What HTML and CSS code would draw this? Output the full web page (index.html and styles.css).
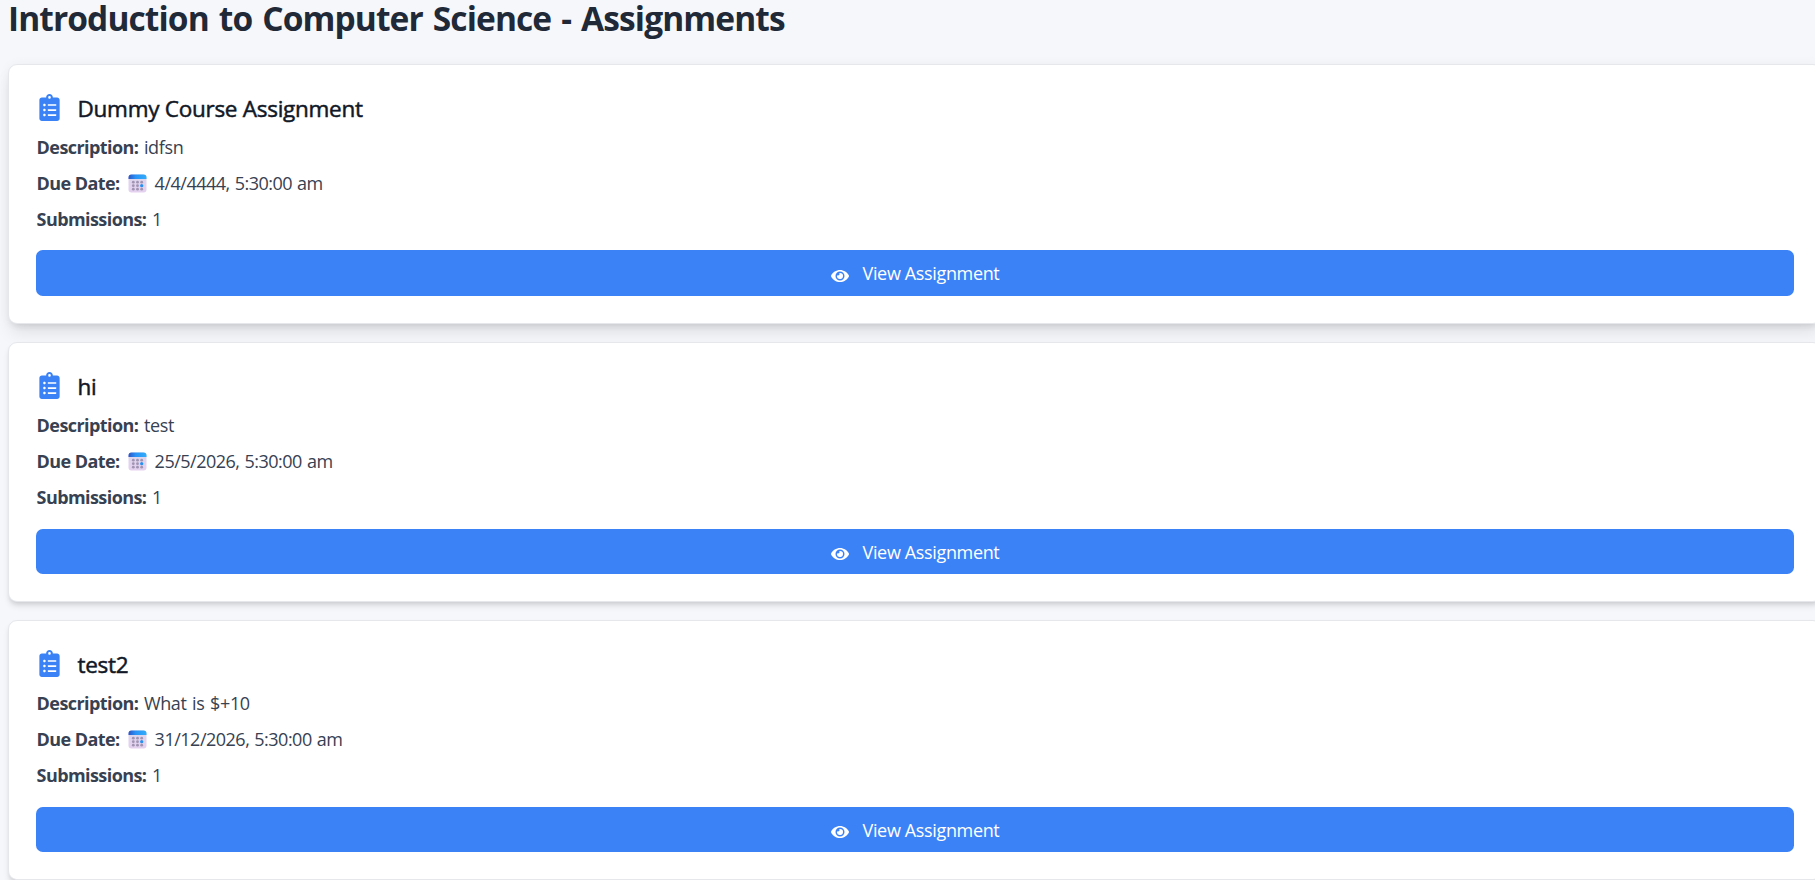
FILE: index.html
```
<!DOCTYPE html>
<html lang="en">
<head>
<meta charset="utf-8">
<title>Assignments</title>
<link rel="stylesheet" href="styles.css">
</head>
<body>
<svg class="defs" aria-hidden="true">
  <defs>
    <linearGradient id="cal-top"><stop offset="0" stop-color="#2d55c9"/><stop offset=".4" stop-color="#2993f5"/><stop offset="1" stop-color="#31adfa"/></linearGradient>
    <linearGradient id="cal-body" x2="0" y2="1"><stop offset="0" stop-color="#dcd8ec"/><stop offset="1" stop-color="#e4d0f0"/></linearGradient>
    <symbol id="clipboard" viewBox="0 0 384 512"><path d="M336 64h-80c0-35.3-28.7-64-64-64s-64 28.7-64 64H48C21.5 64 0 85.500 0 112v352c0 26.500 21.500 48 48 48h288c26.500 0 48-21.500 48-48V112c0-26.500-21.500-48-48-48zM96 424c-13.300 0-24-10.700-24-24s10.700-24 24-24 24 10.700 24 24-10.700 24-24 24zm0-96c-13.300 0-24-10.700-24-24s10.700-24 24-24 24 10.700 24 24-10.700 24-24 24zm0-96c-13.300 0-24-10.700-24-24s10.700-24 24-24 24 10.700 24 24-10.700 24-24 24zm96-192c13.300 0 24 10.700 24 24s-10.700 24-24 24-24-10.700-24-24 10.700-24 24-24zm128 368c0 4.400-3.600 8-8 8H168c-4.400 0-8-3.600-8-8v-16c0-4.400 3.600-8 8-8h144c4.400 0 8 3.600 8 8v16zm0-96c0 4.400-3.600 8-8 8H168c-4.400 0-8-3.600-8-8v-16c0-4.400 3.600-8 8-8h144c4.400 0 8 3.600 8 8v16zm0-96c0 4.400-3.600 8-8 8H168c-4.400 0-8-3.600-8-8v-16c0-4.400 3.600-8 8-8h144c4.400 0 8 3.600 8 8v16z"/></symbol>
    <symbol id="eye" viewBox="0 0 576 512"><path d="M572.520 241.400C518.290 135.590 410.930 64 288 64S57.680 135.640 3.480 241.410a32.350 32.350 0 0 0 0 29.190C57.710 376.410 165.070 448 288 448s230.320-71.640 284.520-177.410a32.350 32.350 0 0 0 0-29.190zM288 400a144 144 0 1 1 144-144 143.930 143.930 0 0 1-144 144zm0-240a95.310 95.310 0 0 0-25.310 3.790 47.850 47.850 0 0 1-66.900 66.900A95.780 95.780 0 1 0 288 160z"/></symbol>
    <symbol id="calendar" viewBox="0 0 19 19">
      <rect x=".5" y=".5" width="18" height="18" rx="3" fill="url(#cal-body)"/>
      <path d="M.5 5V3.500a3 3 0 0 1 3-3h12a3 3 0 0 1 3 3V5z" fill="url(#cal-top)"/>
      <g fill="#a094b2"><circle cx="5.300" cy="8.200" r="1.400"/><circle cx="9.500" cy="8.200" r="1.400"/><circle cx="13.700" cy="8.200" r="1.400"/><circle cx="5.300" cy="11.700" r="1.400"/><circle cx="9.500" cy="11.700" r="1.400"/><circle cx="5.300" cy="15.200" r="1.400"/><circle cx="9.500" cy="15.200" r="1.400"/><circle cx="13.700" cy="15.200" r="1.400"/></g>
      <circle cx="13.700" cy="11.700" r="1.600" fill="#2690f2"/>
    </symbol>
  </defs>
</svg>
<main class="page">
  <h1 class="heading">Introduction to Computer Science - Assignments</h1>
  <div class="list">
    <article class="card raised">
      <h2 class="title"><svg class="clip"><use href="#clipboard"/></svg><span>Dummy Course Assignment</span></h2>
      <p class="row"><b class="label">Description:</b><span class="value">idfsn</span></p>
      <p class="row"><b class="label">Due Date:</b><svg class="cal"><use href="#calendar"/></svg><span class="value date">4/4/4444, 5:30:00 am</span></p>
      <p class="row"><b class="label">Submissions:</b><span class="value">1</span></p>
      <button class="view"><svg class="eye"><use href="#eye"/></svg><span>View Assignment</span></button>
    </article>
    <article class="card">
      <h2 class="title"><svg class="clip"><use href="#clipboard"/></svg><span>hi</span></h2>
      <p class="row"><b class="label">Description:</b><span class="value">test</span></p>
      <p class="row"><b class="label">Due Date:</b><svg class="cal"><use href="#calendar"/></svg><span class="value date">25/5/2026, 5:30:00 am</span></p>
      <p class="row"><b class="label">Submissions:</b><span class="value">1</span></p>
      <button class="view"><svg class="eye"><use href="#eye"/></svg><span>View Assignment</span></button>
    </article>
    <article class="card">
      <h2 class="title"><svg class="clip"><use href="#clipboard"/></svg><span>test2</span></h2>
      <p class="row"><b class="label">Description:</b><span class="value">What is $+10</span></p>
      <p class="row"><b class="label">Due Date:</b><svg class="cal"><use href="#calendar"/></svg><span class="value date">31/12/2026, 5:30:00 am</span></p>
      <p class="row"><b class="label">Submissions:</b><span class="value">1</span></p>
      <button class="view"><svg class="eye"><use href="#eye"/></svg><span>View Assignment</span></button>
    </article>
  </div>
</main>
</body>
</html>
```
FILE: styles.css
```
* { box-sizing: border-box; margin: 0; }
html, body { height: 880px; overflow: hidden; }
body { background: #f5f7fb; color: #374151; font: 18px/27px "Open Sans", "Noto Sans", sans-serif; }
.defs { display: block; width: 0; height: 0; }
.page { width: 1822px; padding-left: 8px; }
.heading { height: 64px; font-size: 33.5px; line-height: 36px; font-weight: 700; color: #1f2937; letter-spacing: -.9px; word-spacing: 2.2px; white-space: nowrap; }
.list { display: flex; flex-direction: column; gap: 18px; }
.card { display: flex; flex-direction: column; height: 260.1px; padding: 27px; border: 1px solid #e5e7eb; border-radius: 9px; background: #fff; box-shadow: 0 4.500px 6.750px -1px rgba(0,0,0,.1), 0 2.250px 4.500px -2px rgba(0,0,0,.1); }
.raised { box-shadow: 0 11px 17px -3px rgba(0,0,0,.1), 0 4.500px 7px -4px rgba(0,0,0,.1), 0 0 12px rgba(0,0,0,.04); }
.title { display: flex; align-items: center; height: 33px; margin-bottom: 9px; font-size: 22.5px; font-weight: 500; color: #111827; letter-spacing: -.27px; -webkit-text-stroke: .5px #111827; }
.clip { width: 27px; height: 27px; margin: -3px 14.5px 0 0; fill: #3b82f6; }
.row { display: flex; align-items: center; height: 27px; margin-bottom: 9px; padding-left: .6px; white-space: nowrap; }
.label { font-weight: 700; letter-spacing: -.58px; margin-right: 5.6px; }
.value { letter-spacing: -.35px; word-spacing: 1.2px; }
.cal { width: 19px; height: 19px; margin: 0 8px 0 2.4px; }
.date { letter-spacing: -.5px; word-spacing: .8px; }
.view { display: flex; align-items: center; justify-content: center; height: 45px; margin-top: auto; padding: 1px 0 0; border: 0; border-radius: 6.750px; background: #3b82f6; color: #fff; font: inherit; letter-spacing: -.35px; }
.raised .view { height: 46px; }
.eye { width: 18px; height: 16px; margin: 4px 14px 0 0; fill: #fff; }
```
